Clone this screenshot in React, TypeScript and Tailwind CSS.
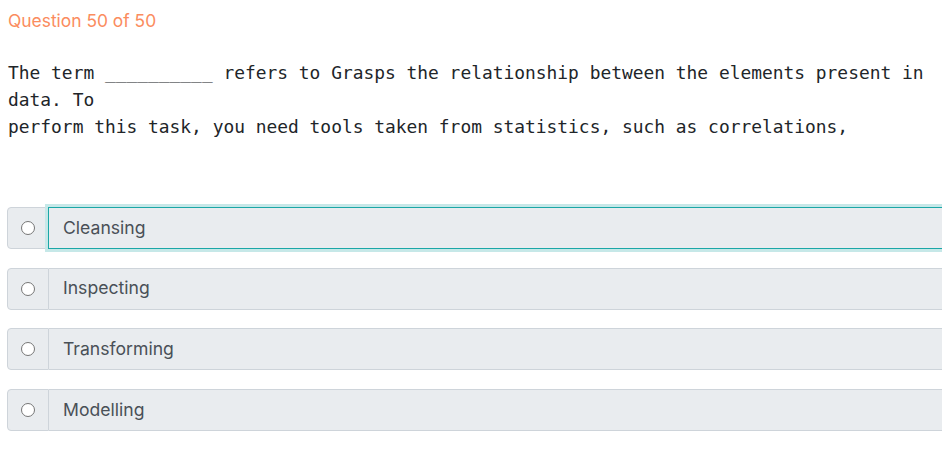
import React from "react";

const options = ["Cleansing", "Inspecting", "Transforming", "Modelling"];

function Option({ label, focused }: { label: string; focused?: boolean }) {
  return (
    <div className="flex h-[42px] mr-[-30px]">
      <div className="w-[42px] shrink-0 flex items-center justify-center bg-[#e9ecef] border border-[#ced4da] rounded-l-[4px]">
        <div className="w-[14px] h-[14px] rounded-full border border-[#767676] bg-white" />
      </div>
      <div
        className={
          "flex-1 flex items-center pl-[14px] bg-[#e9ecef] text-[17.6px] text-[#495057] " +
          (focused
            ? "border border-[#1ba7a7] shadow-[0_0_0_3px_#c6e8e8] relative z-10 ml-[-1px]"
            : "border border-[#ced4da] border-l-0")
        }
        style={{ fontFamily: "Inter, 'Noto Sans', sans-serif" }}
      >
        {label}
      </div>
    </div>
  );
}

export default function App() {
  return (
    <div className="w-[942px] h-[467px] bg-white overflow-hidden">
      <div
        className="pl-2 pt-[10px] text-[17.4px] leading-[22px] text-[#fb8c5e]"
        style={{ fontFamily: "Inter, 'Noto Sans', sans-serif" }}
      >
        Question 50 of 50
      </div>
      <div
        className="pl-2 mt-[27px] text-[17.9px] leading-[27px] text-[#212529] whitespace-pre"
        style={{ fontFamily: "'DejaVu Sans Mono', monospace" }}
      >
        <div>The term __________ refers to Grasps the relationship between the elements present in</div>
        <div>data. To</div>
        <div>perform this task, you need tools taken from statistics, such as correlations,</div>
      </div>
      <div className="pl-[7px] mt-[67px] flex flex-col gap-[18.6px]">
        {options.map((o, i) => (
          <Option key={o} label={o} focused={i === 0} />
        ))}
      </div>
    </div>
  );
}
